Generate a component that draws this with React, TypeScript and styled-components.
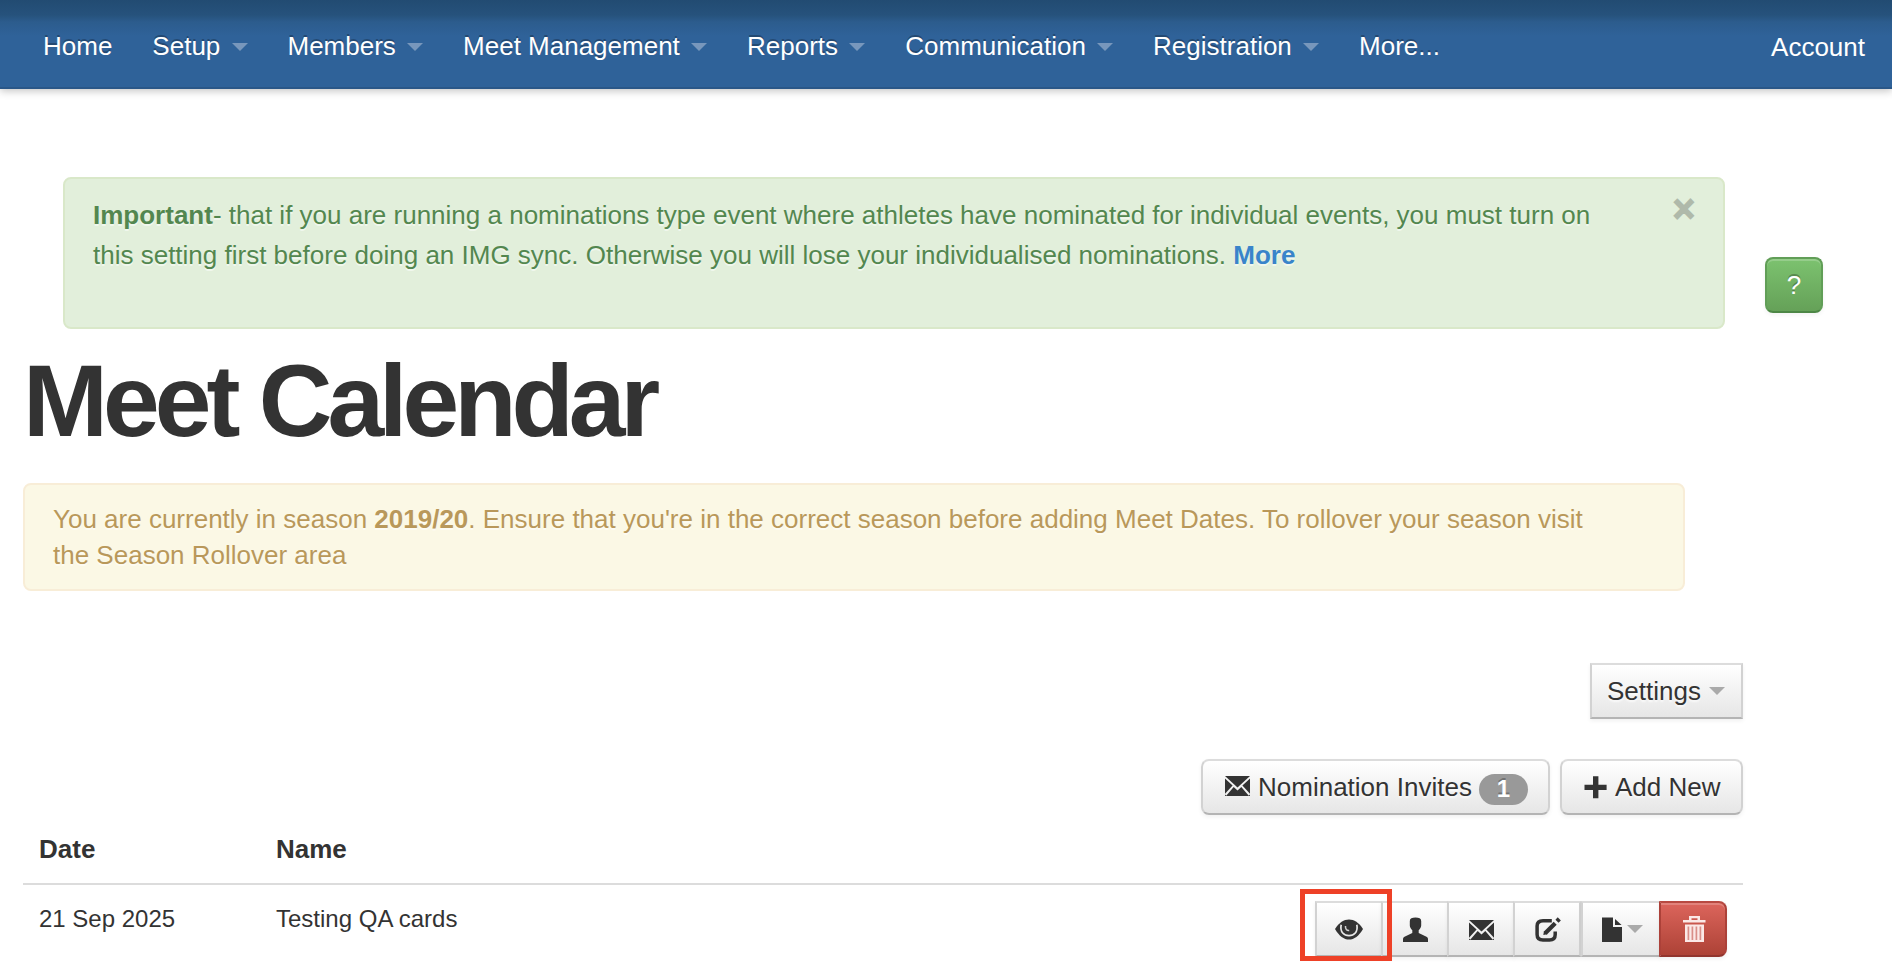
import React from "react";
import styled, { createGlobalStyle, css } from "styled-components";

const GlobalStyle = createGlobalStyle`
  *, *::before, *::after { box-sizing: border-box; }
  body {
    margin: 0;
    background: #fff;
    color: #333;
    font-family: "Liberation Sans", Arial, Helvetica, sans-serif;
    font-size: 26px;
    line-height: 36px;
  }
`;

const Navbar = styled.header`
  display: flex;
  justify-content: space-between;
  height: 89px;
  padding: 0 27px 0 23px;
  color: #fff;
  background: linear-gradient(to bottom, #224b72 0, #26527c 15px, #2c5c8d 22px, #2f6299 36px);
  border-bottom: 2px solid #2a5788;
  box-shadow: 0 2px 8px rgba(0, 0, 0, 0.24);
`;

const NavList = styled.nav`
  display: flex;
`;

const NavItem = styled.a`
  display: flex;
  padding: 28px 20px 0;
  white-space: pre;
  text-shadow: 0 -2px 0 rgba(0, 0, 0, 0.25);
`;

const AccountLink = styled.a`
  padding-top: 29px;
`;

const Caret = styled.span<{ $color: string; $top: number; $left: number }>`
  width: 0;
  height: 0;
  margin: ${(p) => p.$top}px 0 0 ${(p) => p.$left}px;
  border-top: 8px solid ${(p) => p.$color};
  border-left: 8px solid transparent;
  border-right: 8px solid transparent;
`;

const Page = styled.main`
  height: 879px;
  padding: 88px 0 0 23px;
`;

const NoticeRow = styled.div`
  display: flex;
  align-items: flex-start;
  gap: 40px;
  padding-left: 40px;
`;

const Alert = styled.div<{ $tone: "success" | "warning" }>`
  display: flex;
  justify-content: space-between;
  width: 1662px;
  padding: 16px 28px;
  border: 2px solid;
  border-radius: 8px;
  white-space: nowrap;
  text-shadow: 0 2px 0 rgba(255, 255, 255, 0.5);
  ${(p) =>
    p.$tone === "success"
      ? css`
          height: 152px;
          line-height: 40px;
          color: #53874f;
          background: #e2efdb;
          border-color: #d9e8c9;
        `
      : css`
          height: 108px;
          color: #b9985a;
          background: #fbf8e5;
          border-color: #f8edd7;
        `}
`;

const AlertText = styled.p`
  margin: 0;
`;

const MoreLink = styled.a`
  color: #3984ca;
  font-weight: bold;
`;

const Close = styled.button`
  height: 36px;
  margin-top: -4px;
  padding: 0;
  border: 0;
  background: none;
  font: bold 38px/36px "Liberation Sans", Arial, sans-serif;
  -webkit-text-stroke: 1.6px #000;
  color: #000;
  opacity: 0.22;
`;

const buttonBase = css`
  display: flex;
  align-items: flex-start;
  height: 56px;
  margin: 0;
  font: 26px/36px "Liberation Sans", Arial, sans-serif;
  white-space: nowrap;
`;

const HelpButton = styled.button`
  ${buttonBase}
  justify-content: center;
  width: 58px;
  margin-top: 80px;
  padding: 8px 0;
  border: 2px solid #619e57;
  border-bottom-color: #4d8746;
  border-radius: 8px;
  color: #fff;
  background: linear-gradient(#7cc26f, #65a158);
  box-shadow: inset 0 2px 0 rgba(255, 255, 255, 0.2), 0 2px 4px rgba(0, 0, 0, 0.05);
  text-shadow: 0 -2px 0 rgba(0, 0, 0, 0.25);
`;

const Title = styled.h1`
  margin: 32px 0 42px;
  font-size: 102px;
  line-height: 80px;
  letter-spacing: -5px;
`;

const ToolRow = styled.div<{ $top: number }>`
  display: flex;
  justify-content: flex-end;
  gap: 10px;
  width: 1720px;
  margin-top: ${(p) => p.$top}px;
`;

const Button = styled.button<{ $width: number; $square?: boolean }>`
  ${buttonBase}
  width: ${(p) => p.$width}px;
  padding: 8px ${(p) => (p.$square ? 15 : 22)}px;
  border: 2px solid #d2d2d2;
  border-top-color: #dcdcdc;
  border-bottom-color: #b4b4b4;
  border-radius: ${(p) => (p.$square ? 0 : 8)}px;
  color: #333;
  background: linear-gradient(#fff, #e6e6e6);
  box-shadow: 0 2px 4px rgba(0, 0, 0, 0.06);
  text-shadow: 0 2px 2px rgba(255, 255, 255, 0.75);
  svg { flex: none; }
`;

const Badge = styled.span`
  flex: none;
  width: 49px;
  height: 31px;
  margin: 5px 0 0 7px;
  border-radius: 16px;
  background: #999;
  color: #fff;
  font-size: 24px;
  font-weight: bold;
  line-height: 29px;
  text-align: center;
  text-shadow: 0 -2px 0 rgba(0, 0, 0, 0.25);
`;

const IconSlot = styled.span<{ $top?: number }>`
  display: flex;
  padding-top: ${(p) => p.$top ?? 3}px;
`;

const IconLabel = styled.span`
  margin-left: 8px;
`;

const Table = styled.section`
  width: 1720px;
  margin-top: 16px;
`;

const Row = styled.div<{ $head?: boolean }>`
  display: grid;
  grid-template-columns: 237px 1fr auto;
  padding: ${(p) => (p.$head ? "0 16px 16px" : "16px 16px 0")};
  font-size: ${(p) => (p.$head ? 26 : 24)}px;
  font-weight: ${(p) => (p.$head ? "bold" : "normal")};
  border-bottom: ${(p) => (p.$head ? "2px solid #dcdcdc" : "0")};
`;

const Actions = styled.div`
  position: relative;
  display: flex;
`;

const ActionButton = styled.button<{ $width?: number; $apart?: boolean; $danger?: boolean; $shift?: number }>`
  display: flex;
  align-items: flex-start;
  justify-content: center;
  width: ${(p) => p.$width ?? 68}px;
  height: 56px;
  margin: 0 0 0 ${(p) => (p.$apart ? 0 : -2)}px;
  padding: 10px 0 0 ${(p) => p.$shift ?? 0}px;
  border: 2px solid #d2d2d2;
  border-top-color: #dcdcdc;
  border-bottom-color: #b4b4b4;
  background: linear-gradient(#fff, #e6e6e6);
  box-shadow: 0 2px 4px rgba(0, 0, 0, 0.06);
  svg { flex: none; }
  ${(p) =>
    p.$danger &&
    css`
      border-color: #b84a41 #ac4139 #91352e;
      border-radius: 0 8px 8px 0;
      background: linear-gradient(#dc655c, #ad4236);
      box-shadow: inset 0 2px 0 rgba(255, 255, 255, 0.2), 0 2px 4px rgba(0, 0, 0, 0.06);
    `}
`;

const Highlight = styled.div`
  position: absolute;
  left: -15px;
  top: -12px;
  width: 92px;
  height: 72px;
  border: 5px solid #ee4127;
`;

const Envelope = () => (
  <svg width="25" height="28" viewBox="0 0 25 28" fill="#333">
    <path d="M0 4H25L12.5 15.5Z" />
    <path d="M0 6.5L7.6 13.6L0 21.8ZM25 6.5L17.4 13.6L25 21.8Z" />
    <path d="M8.7 14.9L12.5 18.4L16.3 14.9L24 24H1Z" />
    <path d="M0 22.5L1.5 24H0ZM25 22.5L23.5 24H25Z" />
  </svg>
);

const Plus = () => (
  <svg width="23" height="28" viewBox="0 0 23 28" fill="#333">
    <path d="M9 4.2h5.4v8.5H22.6v5.2H14.4v8.3H9v-8.3H.5v-5.2H9z" />
  </svg>
);

const Eye = () => (
  <svg width="28" height="28" viewBox="0 0 28 28">
    <path d="M0 16C4 9.4 9 6.4 14 6.4S24 9.4 28 16C24 23 19 26.6 14 26.6S4 23 0 16Z" fill="#333" />
    <path d="M6.2 11.8C4.6 19 9.2 22.7 14 22.7S23.4 19 21.8 11.8" fill="none" stroke="#e8e8e8" strokeWidth="1.7" />
    <path d="M10.5 13C10.2 16.2 11.8 17.8 14.2 17.5" fill="none" stroke="#d0d0d0" strokeWidth="1.5" />
  </svg>
);

const Person = () => (
  <svg width="25" height="30" viewBox="0 0 25 30" fill="#333">
    <path d="M6.8 8C6.8 5.6 9 4.6 12.5 4.6S18.2 5.6 18.2 8V12.5C18.2 14.2 17 16 15.7 17.2V20L23.5 23.8C24.5 24.4 25 25.2 25 26.3V29H0V26.3C0 25.2.5 24.4 1.5 23.8L9.3 20V17.2C8 16 6.8 14.2 6.8 12.5Z" />
  </svg>
);

const Edit = () => (
  <svg width="26" height="30" viewBox="0 0 26 30" fill="none" stroke="#333">
    <path d="M16.8 7.7H8Q2.1 7.7 2.1 13V21.5Q2.1 27 8 27H14.5Q20.2 27 20.2 21.5V18.5" strokeWidth="3.5" />
    <path d="M10.2 20.2L20.2 10.2" strokeWidth="4.2" />
    <path d="M22 8.2L24.3 5.9" strokeWidth="4.4" />
    <path d="M8.3 22L9 18L12.3 21.2Z" fill="#333" stroke="none" />
  </svg>
);

const FileIcon = () => (
  <svg width="20" height="30" viewBox="0 0 20 30" fill="#333">
    <path d="M0 4.6H11V14H20V29H0Z" />
    <path d="M13 6L19.6 12H13Z" />
  </svg>
);

const Trash = () => (
  <svg width="23" height="30" viewBox="0 0 23 30">
    <path d="M0 7H6V3H17V7H22.5V9.4H0ZM8.5 5.2V7H14.5V5.2Z" fill="#fbe9e7" fillRule="evenodd" />
    <path d="M2 11.5H21V29H2Z" fill="#fbe9e7" />
    <path d="M5.4 13.5V27M9.4 13.5V27M13.4 13.5V27M17.4 13.5V27" stroke="#d98f89" strokeWidth="1.7" />
  </svg>
);

const navItems: [string, boolean][] = [
  ["Home", false],
  ["Setup", true],
  ["Members", true],
  ["Meet Management", true],
  ["Reports", true],
  ["Communication", true],
  ["Registration", true],
  ["More...", false],
];

export default function App() {
  return (
    <>
      <GlobalStyle />
      <Navbar>
        <NavList>
          {navItems.map(([label, menu]) => (
            <NavItem key={label}>
              {label}
              {menu && <Caret $color="#7897bc" $top={15} $left={11.2} />}
            </NavItem>
          ))}
        </NavList>
        <AccountLink>Account</AccountLink>
      </Navbar>
      <Page>
        <NoticeRow>
          <Alert $tone="success">
            <AlertText>
              <b>Important</b>- that if you are running a nominations type event where athletes have nominated for
              individual events, you must turn on
              <br />
              this setting first before doing an IMG sync. Otherwise you will lose your individualised nominations.{" "}
              <MoreLink>More</MoreLink>
            </AlertText>
            <Close aria-label="Close">×</Close>
          </Alert>
          <HelpButton>?</HelpButton>
        </NoticeRow>
        <Title>Meet Calendar</Title>
        <Alert $tone="warning">
          <AlertText>
            You are currently in season <b>2019/20</b>. Ensure that you're in the correct season before adding Meet
            Dates. To rollover your season visit
            <br />
            the Season Rollover area
          </AlertText>
        </Alert>
        <ToolRow $top={72}>
          <Button $width={153} $square>
            Settings
            <Caret $color="#aaa" $top={14} $left={8} />
          </Button>
        </ToolRow>
        <ToolRow $top={40}>
          <Button $width={349}>
            <IconSlot>
              <Envelope />
            </IconSlot>
            <IconLabel>Nomination Invites</IconLabel>
            <Badge>1</Badge>
          </Button>
          <Button $width={183}>
            <IconSlot>
              <Plus />
            </IconSlot>
            <IconLabel>Add New</IconLabel>
          </Button>
        </ToolRow>
        <Table>
          <Row $head>
            <span>Date</span>
            <span>Name</span>
          </Row>
          <Row>
            <span>21 Sep 2025</span>
            <span>Testing QA cards</span>
            <Actions>
              <ActionButton $apart aria-label="View">
                <Eye />
              </ActionButton>
              <ActionButton aria-label="Athletes">
                <Person />
              </ActionButton>
              <ActionButton aria-label="Email">
                <IconSlot $top={3}>
                  <Envelope />
                </IconSlot>
              </ActionButton>
              <ActionButton $shift={1} aria-label="Edit">
                <Edit />
              </ActionButton>
              <ActionButton $width={80} $apart $shift={3} aria-label="Files">
                <FileIcon />
                <Caret $color="#aaa" $top={12} $left={5} />
              </ActionButton>
              <ActionButton $danger $shift={2} aria-label="Delete">
                <Trash />
              </ActionButton>
              <Highlight />
            </Actions>
          </Row>
        </Table>
      </Page>
    </>
  );
}
